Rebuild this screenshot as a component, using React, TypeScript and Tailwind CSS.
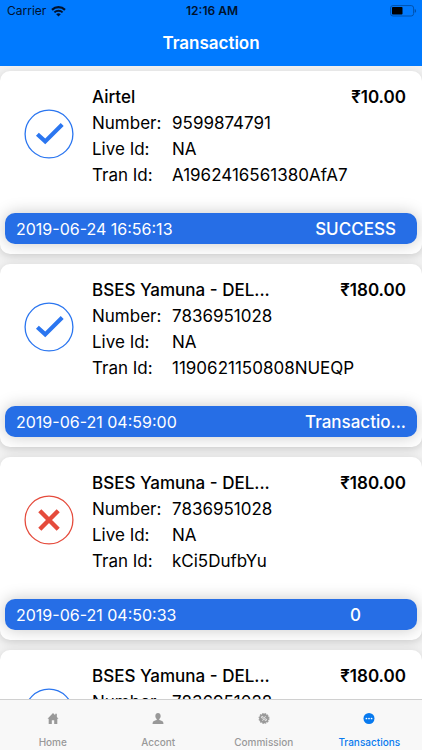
import { ReactNode } from 'react';

type Transaction = {
  name: string;
  amount: string;
  number: string;
  liveId: string;
  tranId: string;
  date: string;
  status: string;
  ok: boolean;
};

const transactions: Transaction[] = [
  {
    name: 'Airtel',
    amount: '₹10.00',
    number: '9599874791',
    liveId: 'NA',
    tranId: 'A1962416561380AfA7',
    date: '2019-06-24 16:56:13',
    status: 'SUCCESS',
    ok: true,
  },
  {
    name: 'BSES Yamuna - DEL...',
    amount: '₹180.00',
    number: '7836951028',
    liveId: 'NA',
    tranId: '1190621150808NUEQP',
    date: '2019-06-21 04:59:00',
    status: 'Transactio...',
    ok: true,
  },
  {
    name: 'BSES Yamuna - DEL...',
    amount: '₹180.00',
    number: '7836951028',
    liveId: 'NA',
    tranId: 'kCi5DufbYu',
    date: '2019-06-21 04:50:33',
    status: '0',
    ok: false,
  },
  {
    name: 'BSES Yamuna - DEL...',
    amount: '₹180.00',
    number: '7836951028',
    liveId: '',
    tranId: '',
    date: '',
    status: '',
    ok: true,
  },
];

function WifiIcon() {
  return (
    <svg viewBox="0 0 15 11" className="h-[11px] w-[15px]" fill="none" stroke="#00122e" aria-hidden="true">
      <path d="M1 3.9a9.2 9.2 0 0 1 13 0" strokeWidth="2.2" />
      <path d="M3.4 6.4a5.8 5.8 0 0 1 8.2 0" strokeWidth="2" />
      <path d="M7.5 10.6 5.2 8.3a3.3 3.3 0 0 1 4.6 0z" fill="#00122e" stroke="none" />
    </svg>
  );
}

function BatteryIcon() {
  return (
    <svg viewBox="0 0 27 12" className="h-3 w-[27px]" aria-hidden="true">
      <rect x="0.6" y="0.6" width="23" height="10.4" rx="2.4" fill="none" stroke="#0052ad" strokeWidth="1" />
      <rect x="2" y="2" width="10.5" height="7.6" rx="0.8" fill="#000" />
      <path d="M24.7 4v3.8c.9-.3 1.4-1 1.4-1.9s-.5-1.6-1.4-1.9z" fill="#0052ad" />
    </svg>
  );
}

function StatusIcon({ ok }: { ok: boolean }) {
  const color = ok ? '#2b76f0' : '#e54b3c';

  return (
    <svg viewBox="0 0 50 50" className="size-[50px]" fill="none" stroke={color} aria-hidden="true">
      <circle cx="25" cy="25" r="23.9" strokeWidth="1.3" />
      {ok ? (
        <path d="M13.4 25.2l7.8 7.2 17-16.8" strokeWidth="4.2" />
      ) : (
        <path d="M15.8 15.8l18.4 18.4M34.2 15.8L15.8 34.2" strokeWidth="4.4" />
      )}
    </svg>
  );
}

function HomeIcon() {
  return (
    <svg viewBox="0 0 12 12" className="size-3" fill="currentColor" aria-hidden="true">
      <path d="M6 0 0 6.3h1.3V12h3.4V8h2.6v4h3.4V6.3H12l-1.8-1.9V.8H8.4v1.7z" />
    </svg>
  );
}

function PersonIcon() {
  return (
    <svg viewBox="0 0 12 12" className="size-3" fill="currentColor" aria-hidden="true">
      <path d="M6 0C4.3 0 3.1 1.3 3.1 3.2c0 1.4.6 2.7 1.5 3.4v.9C3.5 8 .9 8.4.4 9.7L0 12h12l-.4-2.3C11.1 8.4 8.5 8 7.4 7.5v-.9c.9-.7 1.5-2 1.5-3.4C8.9 1.3 7.7 0 6 0z" />
    </svg>
  );
}

function PercentIcon() {
  return (
    <svg viewBox="0 0 12 12" className="size-3" aria-hidden="true">
      <circle cx="6" cy="6" r="5.2" fill="currentColor" />
      <circle cx="6" cy="6" r="5.3" fill="none" stroke="currentColor" strokeWidth="1.3" strokeDasharray="1.7 1.075" />
      <g fill="none" stroke="#f8f8f8" strokeWidth="0.9">
        <circle cx="4.2" cy="4.7" r="1" />
        <circle cx="7.8" cy="7.3" r="1" />
        <path d="M7.6 3.5 4.4 8.5" />
      </g>
    </svg>
  );
}

function MoreIcon() {
  return (
    <svg viewBox="0 0 12 12" className="size-3" aria-hidden="true">
      <circle cx="6" cy="6" r="6" fill="currentColor" />
      <g fill="#fff">
        <circle cx="3.2" cy="6" r="0.95" />
        <circle cx="6" cy="6" r="0.95" />
        <circle cx="8.8" cy="6" r="0.95" />
      </g>
    </svg>
  );
}

function Detail({ label, value }: { label: string; value: string }) {
  return (
    <div className="flex">
      <dt className="w-20 shrink-0">{label}</dt>
      <dd>{value}</dd>
    </div>
  );
}

function TransactionCard({ item }: { item: Transaction }) {
  return (
    <li className="rounded-[10px] bg-white px-[5px] pt-[13px] pb-[10px] shadow-[0_2px_10px_rgba(0,0,0,0.15)]">
      <div className="flex pr-[11px] pl-[19px]">
        <div className="mt-[25px] mr-[18px] shrink-0">
          <StatusIcon ok={item.ok} />
        </div>
        <div className="min-w-0 flex-1 text-[17px] leading-[26px]">
          <div className="flex justify-between">
            <h2 className="font-medium">{item.name}</h2>
            <span className="font-semibold">{item.amount}</span>
          </div>
          <dl>
            <Detail label="Number:" value={item.number} />
            <Detail label="Live Id:" value={item.liveId} />
            <Detail label="Tran Id:" value={item.tranId} />
          </dl>
        </div>
      </div>
      <div className="mt-[25px] flex h-[31px] items-baseline justify-between rounded-[10px] bg-[#266ee6] px-[11px] leading-[33px] text-white shadow-[0_0_16px_rgba(0,0,0,0.22)]">
        <time className="text-[16px]">{item.date}</time>
        <span className="min-w-[101px] text-center text-[17px] font-medium">{item.status}</span>
      </div>
    </li>
  );
}

function Tab({ label, icon, active }: { label: string; icon: ReactNode; active?: boolean }) {
  return (
    <a
      href="#"
      aria-current={active ? 'page' : undefined}
      className={`flex flex-1 flex-col items-center gap-[10px] pt-[13px] text-[10px] leading-4 font-medium ${
        active ? 'text-[#087aef]' : 'text-[#999999]'
      }`}
    >
      {icon}
      {label}
    </a>
  );
}

export default function App() {
  return (
    <div className="flex h-screen flex-col bg-[#f2f2f2] font-['Inter','Liberation_Sans',sans-serif] text-black">
      <header className="h-[66px] shrink-0 bg-[#007aff]">
        <div className="grid h-[22px] grid-cols-3 items-center pr-[5px] pl-[7px] text-[12px] text-[#00122e]">
          <div className="flex items-center gap-[5px]">
            <span>Carrier</span>
            <WifiIcon />
          </div>
          <span className="text-center font-semibold">12:16 AM</span>
          <div className="flex justify-end">
            <BatteryIcon />
          </div>
        </div>
        <h1 className="text-center text-[17px] leading-[42px] font-semibold text-white">Transaction</h1>
      </header>

      <main className="min-h-0 flex-1 overflow-y-auto [scrollbar-width:none]">
        <ul className="flex flex-col gap-[10px] py-[5px]">
          {transactions.map((item, i) => (
            <TransactionCard key={i} item={item} />
          ))}
        </ul>
      </main>

      <nav className="flex h-[51px] shrink-0 border-t border-[#d0d0d0] bg-[#f8f8f8]">
        <Tab label="Home" icon={<HomeIcon />} />
        <Tab label="Accont" icon={<PersonIcon />} />
        <Tab label="Commission" icon={<PercentIcon />} />
        <Tab label="Transactions" icon={<MoreIcon />} active />
      </nav>
    </div>
  );
}
